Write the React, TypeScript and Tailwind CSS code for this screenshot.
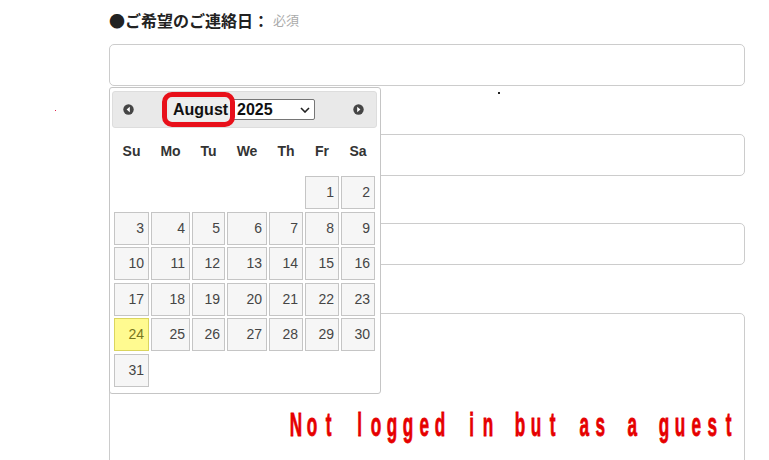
import React from "react";

const COLS = "grid grid-cols-[35px_39px_33px_40px_34px_34px_34px] gap-x-[2px]";

const weeks: (number | null)[][] = [
  [null, null, null, null, null, 1, 2],
  [3, 4, 5, 6, 7, 8, 9],
  [10, 11, 12, 13, 14, 15, 16],
  [17, 18, 19, 20, 21, 22, 23],
  [24, 25, 26, 27, 28, 29, 30],
  [31, null, null, null, null, null, null],
];

const days = ["Su", "Mo", "Tu", "We", "Th", "Fr", "Sa"];

function NavIcon({ dir }: { dir: "prev" | "next" }) {
  return (
    <svg width="11" height="11" viewBox="0 0 11 11" className="block">
      <circle cx="5.5" cy="5.5" r="5.2" fill="#454545" />
      {dir === "prev" ? (
        <polygon points="6.8,2.8 3.6,5.5 6.8,8.2" fill="#fff" />
      ) : (
        <polygon points="4.2,2.8 7.4,5.5 4.2,8.2" fill="#fff" />
      )}
    </svg>
  );
}

const guestText = "Not logged in but as a guest";

export default function App() {
  return (
    <div className="relative w-[769px] h-[460px] overflow-hidden bg-white font-['Liberation_Sans',Arial,sans-serif]">
      <div className="absolute left-[55px] top-[110px] w-[1px] h-[1px] bg-[#e0204a]" />
      <div className="absolute left-[498px] top-[92px] w-[2px] h-[2px] bg-[#222]" />

      <div className="relative ml-[109px] w-[636px] pt-[8px]">
        <div className="flex items-center h-[24px] font-['Noto_Sans_CJK_JP',sans-serif]">
          <span className="text-[16px] font-bold text-[#222] leading-[24px]">●ご希望のご連絡日：</span>
          <span className="ml-[4px] text-[13px] text-[#aaaaaa] leading-[24px]">必須</span>
        </div>
        <div className="mt-[12px] h-[42px] border border-[#cccccc] rounded-[5px]" />
        <div className="mt-[48px] h-[42px] border border-[#cccccc] rounded-[5px]" />
        <div className="mt-[47px] h-[42px] border border-[#cccccc] rounded-[5px]" />
        <div className="mt-[48px] h-[200px] border border-[#cccccc] rounded-[5px]" />

        {/* datepicker */}
        <div className="absolute left-0 top-[87px] w-[272px] h-[307px] border border-[#c5c5c5] rounded-[3px] bg-white pl-[2px] pt-[3px]">
          <div className="flex items-center w-[265px] h-[37px] bg-[#e9e9e9] border border-[#dddddd] rounded-[3px] pl-[10px]">
            <NavIcon dir="prev" />
            <div className="ml-[35px] flex items-center h-[22px] w-[63px] bg-[#eeeeee] pl-[4px] text-[16px] font-bold text-[#111]">
              August
            </div>
            <div className="flex items-center justify-between h-[21px] w-[83px] bg-white border border-[#767676] rounded-[2px] pl-[4px] pr-[4px] text-[16px] font-bold text-[#111]">
              <span>2025</span>
              <svg width="10" height="6" viewBox="0 0 10 6" className="block">
                <polyline points="1,1 5,5 9,1" fill="none" stroke="#222" strokeWidth="1.6" />
              </svg>
            </div>
            <div className="ml-[38px]">
              <NavIcon dir="next" />
            </div>
          </div>

          <div className={`${COLS} ml-[2px] h-[46px] items-center`}>
            {days.map((d) => (
              <div key={d} className="text-center text-[14px] font-bold text-[#333]">
                {d}
              </div>
            ))}
          </div>

          <div className={`${COLS} ml-[2px] mt-[2px] gap-y-[2.6px]`}>
            {weeks.flat().map((n, i) =>
              n === null ? (
                <div key={i} className="h-[33px]" />
              ) : n === 24 ? (
                <div
                  key={i}
                  className="h-[33px] flex items-center justify-end pr-[4px] border border-[#dad55e] bg-[#fffa90] text-[#777620] text-[14px]"
                >
                  {n}
                </div>
              ) : (
                <div
                  key={i}
                  className="h-[33px] flex items-center justify-end pr-[4px] border border-[#c5c5c5] bg-[#f6f6f6] text-[#454545] text-[14px]"
                >
                  {n}
                </div>
              )
            )}
          </div>

          {/* annotation */}
          <div className="absolute left-[52px] top-[4px] w-[73px] h-[35px] border-[5px] border-[#e8101a] rounded-[10px]" />
        </div>
      </div>

      {/* red annotation text */}
      <div className="absolute left-[288px] top-[408px] flex h-[33px] text-[33px] leading-[33px] font-bold text-[#e60000] [-webkit-text-stroke:0.8px_#e60000]">
        {guestText.split("").map((c, i) => (
          <span key={i} className="flex justify-center w-[16px]">
            <span className="inline-block scale-x-[0.52] whitespace-pre">{c}</span>
          </span>
        ))}
      </div>
    </div>
  );
}
